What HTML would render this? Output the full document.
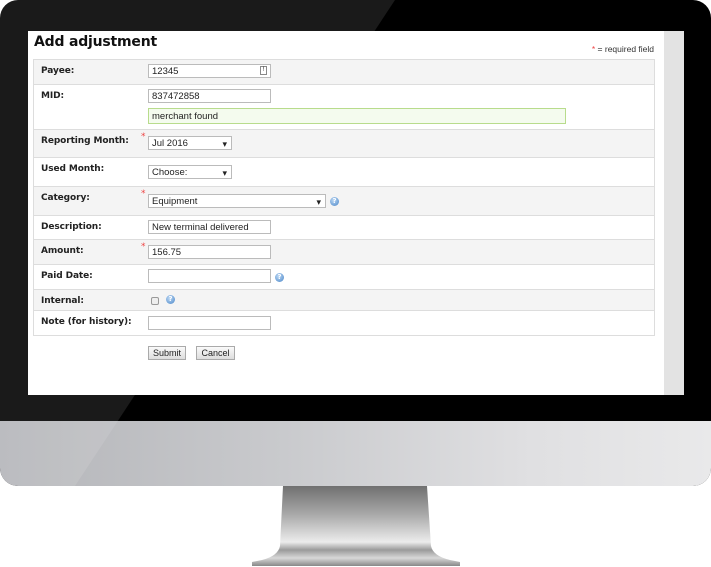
<!DOCTYPE html>
<html><head><meta charset="utf-8"><style>
*{margin:0;padding:0;box-sizing:border-box}
body{width:711px;height:567px;background:#fff;position:relative;overflow:hidden;font-family:"DejaVu Sans",Verdana,sans-serif}
.bezel{position:absolute;left:0;top:0;width:711px;height:486px;border-radius:18px;background:#000;overflow:hidden}
.chin{position:absolute;left:0;top:421px;width:711px;height:65px;background:linear-gradient(90deg,#b4b5b9,#c9cacd 40%,#e0e0e2 75%,#e9e9ea)}
.gloss{position:absolute;left:0;top:0;width:711px;height:486px;background:rgba(255,255,255,.1);clip-path:polygon(0 0,395px 0,75px 486px,0 486px)}
.screen{position:absolute;left:28px;top:31px;width:656px;height:364px;background:#fff;overflow:hidden}
.scroll{position:absolute;right:0;top:0;width:20px;height:364px;background:#e3e3e3}
.stand{position:absolute;left:250px;top:486px;width:212px;height:81px}
.abs{position:absolute}
h1{position:absolute;left:6px;top:3px;font-size:14px;font-weight:bold;color:#111;letter-spacing:-0.2px}
.req{position:absolute;right:30px;top:13px;font-family:"Liberation Sans",sans-serif;font-size:8.5px;color:#333}
.star{color:#e44}
.row{position:absolute;left:5px;width:622px;border:1px solid #ddd;border-top:none}
.g{background:#f4f4f4}
.lab{position:absolute;left:7px;top:6px;font-size:9px;font-weight:bold;color:#222;letter-spacing:-0.1px}
.in{position:absolute;height:14px;border:1px solid #bbb;background:#fff;font-family:"Liberation Sans",sans-serif;font-size:9.5px;color:#222;padding-left:3px;padding-top:1px;line-height:12px}
.sel::after{content:"▾";position:absolute;right:4px;top:1px;font-size:9px}
.q{position:absolute;width:9px;height:9px;border-radius:50%;background:radial-gradient(circle at 40% 35%,#bcd8f4,#4a86c8);font-size:7px;color:#fff;text-align:center;line-height:9px;font-weight:bold}
.rs{position:absolute;color:#e44;font-size:9px}
.btn{position:absolute;height:14px;border:1px solid #aaa;background:linear-gradient(#fafafa,#ddd);font-family:"Liberation Sans",sans-serif;font-size:9px;line-height:12px;text-align:center;color:#222}
</style></head><body>
<div class="bezel">
<div class="chin"></div>
<div class="gloss"></div>
</div>
<div class="screen">
<div class="scroll"></div>
<h1>Add adjustment</h1>
<div class="req"><span class="star">*</span> = required field</div>
<div style="position:absolute;left:5px;top:28px;width:622px;border-top:1px solid #ddd"></div>
<div class="row g" style="top:29px;height:25px"><div class="lab">Payee:</div><div class="in" style="left:114px;top:4px;width:123px">12345<span style="position:absolute;right:3px;top:1px;width:7px;height:9px;border:1px solid #888;font-size:6px;line-height:7px;text-align:center">!</span></div></div>
<div class="row" style="top:54px;height:45px"><div class="lab">MID:</div><div class="in" style="left:114px;top:4px;width:123px">837472858</div><div class="in" style="left:114px;top:23px;width:418px;height:16px;border-color:#b8dc8c;background:#f4fbee;line-height:13px">merchant found</div></div>
<div class="row g" style="top:99px;height:28px"><div class="lab">Reporting Month:</div><span class="rs" style="left:107px;top:2px">*</span><div class="in sel" style="left:114px;top:6px;width:84px">Jul 2016</div></div>
<div class="row" style="top:127px;height:29px"><div class="lab">Used Month:</div><div class="in sel" style="left:114px;top:7px;width:84px">Choose:</div></div>
<div class="row g" style="top:156px;height:29px"><div class="lab">Category:</div><span class="rs" style="left:107px;top:2px">*</span><div class="in sel" style="left:114px;top:7px;width:178px">Equipment</div><div class="q" style="left:296px;top:10px">?</div></div>
<div class="row" style="top:185px;height:24px"><div class="lab">Description:</div><div class="in" style="left:114px;top:4px;width:123px">New terminal delivered</div></div>
<div class="row g" style="top:209px;height:25px"><div class="lab">Amount:</div><span class="rs" style="left:107px;top:2px">*</span><div class="in" style="left:114px;top:5px;width:123px">156.75</div></div>
<div class="row" style="top:234px;height:25px"><div class="lab">Paid Date:</div><div class="in" style="left:114px;top:4px;width:123px"></div><div class="q" style="left:241px;top:8px">?</div></div>
<div class="row g" style="top:259px;height:21px"><div class="lab">Internal:</div><div class="abs" style="left:117px;top:7px;width:8px;height:8px;border:1px solid #999;border-radius:2px;background:#eee"></div><div class="q" style="left:132px;top:5px">?</div></div>
<div class="row" style="top:280px;height:25px"><div class="lab">Note (for history):</div><div class="in" style="left:114px;top:5px;width:123px"></div></div>
<div class="btn" style="left:120px;top:315px;width:38px">Submit</div>
<div class="btn" style="left:168px;top:315px;width:39px">Cancel</div>
</div>
<svg class="stand" viewBox="0 0 212 81">
<defs><linearGradient id="sg" x1="0" y1="0" x2="0" y2="1">
<stop offset="0" stop-color="#707070"/><stop offset=".35" stop-color="#a8a8a8"/><stop offset=".7" stop-color="#ececec"/><stop offset=".8" stop-color="#9a9a9a"/><stop offset=".9" stop-color="#d8d8d8"/><stop offset="1" stop-color="#888"/></linearGradient></defs>
<path d="M33 0 H177 L181 60 Q183 70 200 74 L210 76 V80 H2 V76 L12 74 Q28 70 30 60 Z" fill="url(#sg)"/>
</svg>
</body></html>
